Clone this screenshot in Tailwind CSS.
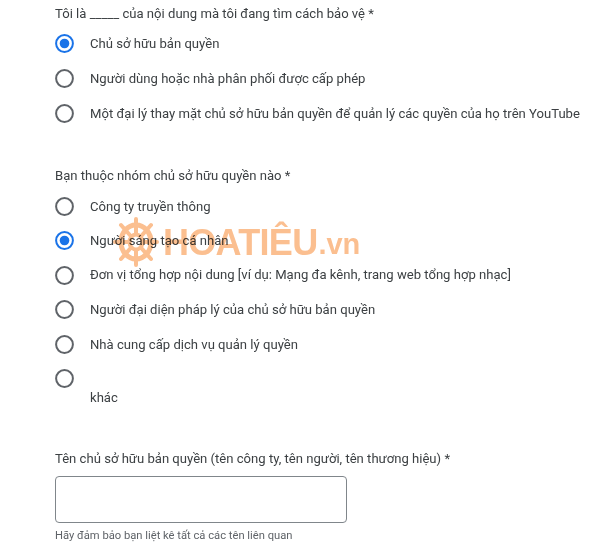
<!DOCTYPE html>
<html><head><meta charset="utf-8"><script src="https://cdn.jsdelivr.net/npm/@tailwindcss/browser@4"></script></head>
<body class="bg-white">
<div class="relative w-[600px] h-[546px] overflow-hidden pl-[55px] pt-[5px] font-['Roboto',sans-serif] text-[13.1px] text-[#3c4043]">
  <div class="h-[18px] leading-[18px]">Tôi là _____ của nội dung mà tôi đang tìm cách bảo vệ *</div>
  <div class="mt-[3px] flex flex-col">
    <div class="h-[35px] flex items-center gap-[16px]">
      <svg class="w-[19px] h-[19px]" viewBox="0 0 19 19"><circle cx="9.5" cy="9.5" r="8.4" fill="none" stroke="#1a73e8" stroke-width="2"/><circle cx="9.5" cy="9.5" r="4.8" fill="#1a73e8"/></svg><span>Chủ sở hữu bản quyền</span></div>
    <div class="h-[35px] flex items-center gap-[16px]">
      <svg class="w-[19px] h-[19px]" viewBox="0 0 19 19"><circle cx="9.5" cy="9.5" r="8.4" fill="none" stroke="#5f6368" stroke-width="2"/></svg><span>Người dùng hoặc nhà phân phối được cấp phép</span></div>
    <div class="h-[35px] flex items-center gap-[16px]">
      <svg class="w-[19px] h-[19px]" viewBox="0 0 19 19"><circle cx="9.5" cy="9.5" r="8.4" fill="none" stroke="#5f6368" stroke-width="2"/></svg><span class="whitespace-nowrap">Một đại lý thay mặt chủ sở hữu bản quyền để quản lý các quyền của họ trên YouTube</span></div>
  </div>
  <div class="mt-[36px] h-[18px] leading-[18px]">Bạn thuộc nhóm chủ sở hữu quyền nào *</div>
  <div class="mt-[4px] flex flex-col">
    <div class="h-[34.5px] flex items-center gap-[16px]">
      <svg class="w-[19px] h-[19px]" viewBox="0 0 19 19"><circle cx="9.5" cy="9.5" r="8.4" fill="none" stroke="#5f6368" stroke-width="2"/></svg><span class="relative top-[1px]">Công ty truyền thông</span></div>
    <div class="h-[34.5px] flex items-center gap-[16px]">
      <svg class="w-[19px] h-[19px]" viewBox="0 0 19 19"><circle cx="9.5" cy="9.5" r="8.4" fill="none" stroke="#1a73e8" stroke-width="2"/><circle cx="9.5" cy="9.5" r="4.8" fill="#1a73e8"/></svg><span>Người sáng tạo cá nhân</span></div>
    <div class="h-[34.5px] flex items-center gap-[16px]">
      <svg class="w-[19px] h-[19px]" viewBox="0 0 19 19"><circle cx="9.5" cy="9.5" r="8.4" fill="none" stroke="#5f6368" stroke-width="2"/></svg><span>Đơn vị tổng hợp nội dung [ví dụ: Mạng đa kênh, trang web tổng hợp nhạc]</span></div>
    <div class="h-[34.5px] flex items-center gap-[16px]">
      <svg class="w-[19px] h-[19px]" viewBox="0 0 19 19"><circle cx="9.5" cy="9.5" r="8.4" fill="none" stroke="#5f6368" stroke-width="2"/></svg><span>Người đại diện pháp lý của chủ sở hữu bản quyền</span></div>
    <div class="h-[34.5px] flex items-center gap-[16px]">
      <svg class="w-[19px] h-[19px]" viewBox="0 0 19 19"><circle cx="9.5" cy="9.5" r="8.4" fill="none" stroke="#5f6368" stroke-width="2"/></svg><span class="relative top-[1px]">Nhà cung cấp dịch vụ quản lý quyền</span></div>
    <div class="h-[34.5px] flex items-center gap-[16px]">
      <svg class="w-[19px] h-[19px]" viewBox="0 0 19 19"><circle cx="9.5" cy="9.5" r="8.4" fill="none" stroke="#5f6368" stroke-width="2"/></svg></div>
  </div>
  <div class="pl-[35px] h-[18px] leading-[18px] -mt-[7px]">khác</div>
  <div class="mt-[43px] h-[18px] leading-[18px] whitespace-nowrap">Tên chủ sở hữu bản quyền (tên công ty, tên người, tên thương hiệu) *</div>
  <div class="mt-[8px] w-[292px] h-[47px] border border-[#80868b] rounded-[4px]"></div>
  <div class="mt-[5px] text-[11.2px] leading-[16px] text-[#5f6368]">Hãy đảm bảo bạn liệt kê tất cả các tên liên quan</div>
  <div class="absolute left-[113px] top-[216px] flex items-center text-[#fbbf90] font-['Liberation_Sans',sans-serif] font-bold mix-blend-multiply">
    <svg class="w-[46px] h-[52px]" viewBox="0 0 46 52" fill="none" stroke="#fbbf90"><g stroke-linecap="round"><ellipse cx="23" cy="26" rx="15" ry="17" stroke-width="5"/><path d="M23 3V49M2 26H44M8 9L38 43M38 9L8 43" stroke-width="4"/></g><ellipse cx="23" cy="26" rx="6.5" ry="7.5" fill="#fff" stroke-width="4"/></svg>
    <span class="text-[36px] leading-[44px] tracking-[-0.7px] ml-[4px] mt-[1px]">HOATIÊU</span><span class="text-[29px] leading-[44px] mt-[3px] ml-[1px]">.vn</span>
  </div>
</div>
</body></html>
